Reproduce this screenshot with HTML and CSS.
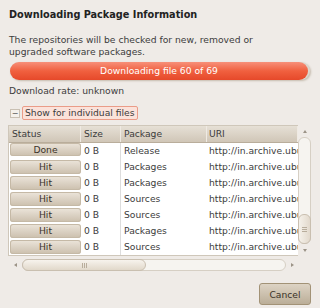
FILE: index.html
```html
<!DOCTYPE html>
<html lang="en">
<head>
    <meta charset="UTF-8">
    <title>Downloading Package Information</title>
    <link rel="stylesheet" href="styles.css">
</head>
<body>
    <div class="dialog">
        <h1>Downloading Package Information</h1>
        <p class="desc">The repositories will be checked for new, removed or upgraded software packages.</p>
        <div class="progress">
            <div class="bar">Downloading file 60 of 69</div>
        </div>
        <div class="rate">Download rate: unknown</div>
        <div class="expander">
            <span class="exp-box">&minus;</span>
            <span class="exp-label">Show for individual files</span>
        </div>
        <div class="tree">
            <div class="tree-main">
                <div class="list">
                    <div class="row head">
                        <div class="cell">Status</div>
                        <div class="cell">Size</div>
                        <div class="cell">Package</div>
                        <div class="cell">URI</div>
                    </div>
                    <div class="rows">
                        <div class="row first">
                            <div class="cell"><span class="st">Done</span></div>
                            <div class="cell">0 B</div>
                            <div class="cell">Release</div>
                            <div class="cell">http://in.archive.ubu</div>
                        </div>
                        <div class="row">
                            <div class="cell"><span class="st">Hit</span></div>
                            <div class="cell">0 B</div>
                            <div class="cell">Packages</div>
                            <div class="cell">http://in.archive.ubu</div>
                        </div>
                        <div class="row">
                            <div class="cell"><span class="st">Hit</span></div>
                            <div class="cell">0 B</div>
                            <div class="cell">Packages</div>
                            <div class="cell">http://in.archive.ubu</div>
                        </div>
                        <div class="row">
                            <div class="cell"><span class="st">Hit</span></div>
                            <div class="cell">0 B</div>
                            <div class="cell">Sources</div>
                            <div class="cell">http://in.archive.ubu</div>
                        </div>
                        <div class="row">
                            <div class="cell"><span class="st">Hit</span></div>
                            <div class="cell">0 B</div>
                            <div class="cell">Sources</div>
                            <div class="cell">http://in.archive.ubu</div>
                        </div>
                        <div class="row">
                            <div class="cell"><span class="st">Hit</span></div>
                            <div class="cell">0 B</div>
                            <div class="cell">Packages</div>
                            <div class="cell">http://in.archive.ubu</div>
                        </div>
                        <div class="row">
                            <div class="cell"><span class="st">Hit</span></div>
                            <div class="cell">0 B</div>
                            <div class="cell">Sources</div>
                            <div class="cell">http://in.archive.ubu</div>
                        </div>
                    </div>
                </div>
                <div class="vscroll">
                    <span class="arrow up"></span>
                    <div class="vtrough"><div class="vthumb"><span class="grip-v"></span></div></div>
                    <span class="arrow down"></span>
                </div>
            </div>
            <div class="hscroll">
                <span class="arrow left"></span>
                <div class="htrough"><div class="hthumb"><span class="grip-h"></span></div></div>
                <span class="arrow right"></span>
            </div>
        </div>
        <div class="buttons">
            <button class="btn">Cancel</button>
        </div>
    </div>
</body>
</html>
```

FILE: styles.css
```css
body {
    margin: 0;
    background: #efebe7;
    font-family: "DejaVu Sans", sans-serif;
    font-size: 9.2px;
    color: #3c3c3c;
}
.dialog {
    width: 320px;
    height: 308px;
    padding: 8px 9px 0 9px;
    box-sizing: border-box;
}
h1 {
    margin: 0;
    font-family: "DejaVu Sans Condensed", "DejaVu Sans", sans-serif;
    font-size: 10.8px;
    line-height: 14px;
    color: #222;
}
.desc {
    margin: 12px 0 0 0;
    line-height: 12px;
    width: 270px;
}
.progress {
    margin-top: 4px;
    margin-left: 1px;
    width: 300px;
    height: 18px;
    border-radius: 9px;
    background: #ddd6cc;
    box-shadow: 1px 1px 2px rgba(120, 100, 70, 0.35);
}
.bar {
    height: 18px;
    width: 298px;
    border-radius: 9px;
    background: linear-gradient(#f7907a, #f0603f 50%, #e6492a);
    color: #fff;
    text-align: center;
    line-height: 18px;
}
.rate {
    margin-top: 5px;
    line-height: 12px;
}
.expander {
    display: flex;
    align-items: center;
    margin-top: 9px;
    margin-left: 1px;
    height: 14px;
}
.exp-box {
    width: 8px;
    height: 7px;
    border: 1px solid #c9c0b3;
    background: #f4f1ec;
    font-size: 8px;
    line-height: 7px;
    text-align: center;
    color: #555;
}
.exp-label {
    margin-left: 2px;
    padding: 0 2px;
    height: 12px;
    line-height: 12px;
    border: 1px solid #ea9c88;
    border-radius: 2px;
    background: #fbe2da;
}
.tree {
    margin-top: 5px;
    margin-left: -1px;
}
.tree-main {
    display: flex;
}
.list {
    width: 291px;
    border: 1px solid #cfc7ba;
    border-right: none;
    background: #fff;
}
.row {
    display: grid;
    grid-template-columns: 72px 40px 86px 1fr;
    height: 16px;
    line-height: 16px;
    white-space: nowrap;
}
.row .cell {
    overflow: hidden;
    padding-left: 3px;
}
.row .cell:first-child {
    padding-left: 1px;
}
.row .cell:last-child {
    padding-left: 2px;
}
.head {
    background: linear-gradient(#e6e0d6, #d0c6b7);
    border-bottom: 1px solid #b9ad9b;
}
.head .cell {
    border-right: 1px solid #efeae3;
    padding-left: 3px;
}
.head .cell:first-child {
    padding-left: 3px;
}
.rows .cell:nth-child(2) {
    border-right: 1px solid #ddd;
}
.st {
    display: block;
    margin: 1px 0;
    height: 14px;
    line-height: 14px;
    text-align: center;
    border-radius: 3px;
    background: linear-gradient(#ece5db, #cbbfad);
    box-shadow: inset 0 0 0 1px #c5b9a6;
    color: #3a3228;
}
.first .st {
    margin-top: 0;
    height: 13px;
}
.arrow {
    width: 0;
    height: 0;
    border: 2px solid transparent;
}
.arrow.up {
    border-bottom: 3px solid #9b9387;
    border-top: none;
    margin: 5px 0 4px;
}
.arrow.down {
    border-top: 3px solid #9b9387;
    border-bottom: none;
    margin: 5px 0 4px;
}
.arrow.left {
    border-right: 3px solid #9b9387;
    border-left: none;
    margin: 0 5px 0 3px;
}
.arrow.right {
    border-left: 3px solid #9b9387;
    border-right: none;
    margin: 0 3px 0 5px;
}
.vscroll {
    width: 13px;
    display: flex;
    flex-direction: column;
    align-items: center;
}
.vtrough {
    flex: 1;
    width: 11px;
    border-radius: 6px;
    border: 1px solid #d6cfc4;
    background: #f6f4f0;
    display: flex;
    flex-direction: column;
    justify-content: flex-end;
}
.vthumb {
    height: 28px;
    border-radius: 6px;
    background: linear-gradient(90deg, #f5f1ea, #e2d9cc);
    border: 1px solid #c9bfb0;
    margin: -1px;
    display: flex;
    align-items: center;
    justify-content: center;
}
.grip-v {
    width: 5px;
    height: 5px;
    background: repeating-linear-gradient(#b8ad9c 0 1px, transparent 1px 2px);
}
.hscroll {
    display: flex;
    align-items: center;
    height: 12px;
    margin-top: 3px;
    padding-left: 3px;
}
.htrough {
    width: 262px;
    height: 10px;
    border-radius: 6px;
    border: 1px solid #d6cfc4;
    background: #f6f4f0;
}
.hthumb {
    width: 122px;
    height: 10px;
    margin: -1px;
    border-radius: 6px;
    border: 1px solid #c9bfb0;
    background: linear-gradient(#f7f3ed, #e1d8ca);
    display: flex;
    align-items: center;
    justify-content: center;
}
.grip-h {
    width: 5px;
    height: 5px;
    background: repeating-linear-gradient(90deg, #b8ad9c 0 1px, transparent 1px 2px);
}
.buttons {
    display: flex;
    justify-content: flex-end;
    margin-top: 12px;
}
.btn {
    width: 52px;
    height: 22px;
    border: 1px solid #a29276;
    border-radius: 3px;
    background: linear-gradient(#ddd3c4, #bbae98);
    font-family: "DejaVu Sans", sans-serif;
    font-size: 9.2px;
    color: #3a3228;
    padding: 0;
}
```
